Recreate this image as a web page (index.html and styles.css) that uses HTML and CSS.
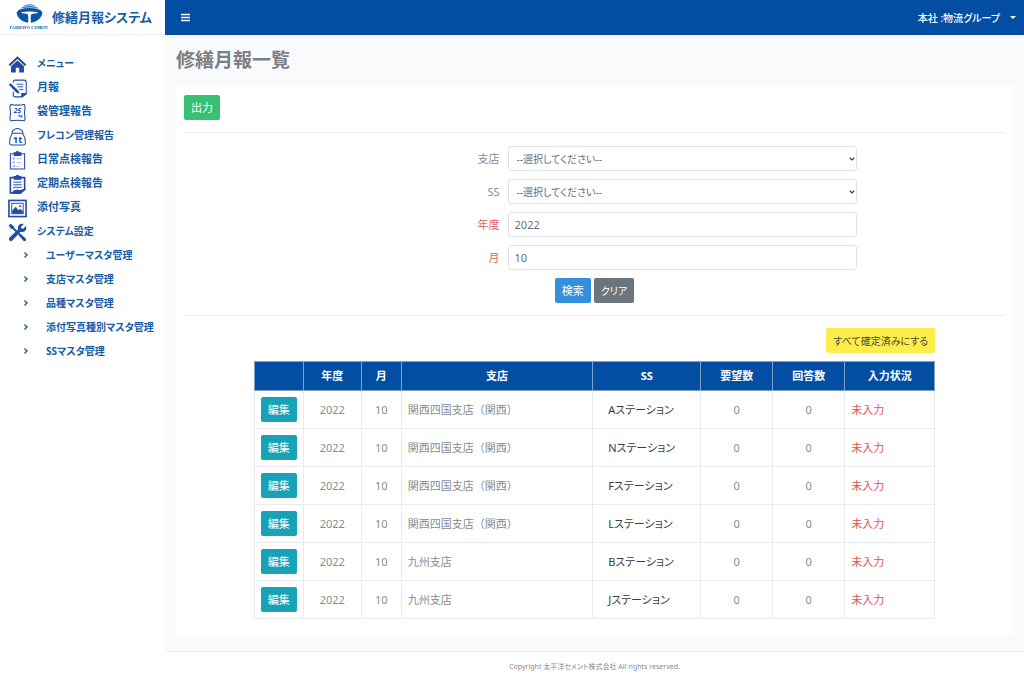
FILE: index.html
```html
<!DOCTYPE html>
<html lang="ja">
<head>
<meta charset="utf-8">
<meta name="viewport" content="width=device-width, initial-scale=1">
<title>修繕月報システム</title>
<link rel="stylesheet" href="styles.css">
</head>
<body>
<div class="app">
  <aside class="sidebar">
    <a class="brand" href="#">
      <svg class="brand-logo" viewBox="0 0 38 26" aria-hidden="true">
        <path d="M12.500 2.200Q19.500 -1.800 26.500 2.200Q19.500 1 12.500 2.200Z" fill="#4f86c4"/>
        <path d="M9.500 4.500Q19.500 -.300 29.500 4.500Q19.500 2.300 9.500 4.500Z" fill="#2b6cb4"/>
        <path d="M6.700 8.500Q8 4 19.500 4T32.300 8.500C32.500 13 27 18.800 19.500 18.800S6.500 13 6.700 8.500Z" fill="#0a55a4"/>
        <path d="M11.300 8.200Q19.500 6.800 27.700 8.200L27.200 9.300Q23 9.300 21 10.500Q20.400 14 20.800 19H18.200Q18.600 14 18 10.500Q16 9.300 11.800 9.300Z" fill="#fff"/>
        <text x="19" y="24.500" text-anchor="middle" class="brand-name">T<tspan class="brand-small">AIHEIYO</tspan> C<tspan class="brand-small">EMENT</tspan></text>
      </svg>
      <span class="brand-title">修繕月報システム</span>
    </a>
    <nav class="menu">
      <a class="menu-item small" href="#"><svg class="icon" viewBox="0 0 20 20"><path d="M10 1.200L.700 10l1.500 1.500L10 4.300l7.800 7.200L19.300 10z"/><path d="M10 5.700l-6.800 6.200V18.500h5v-5h3.600v5h5v-6.600z"/></svg>メニュー</a>
      <a class="menu-item" href="#"><svg class="icon line" viewBox="0 0 20 20"><path d="M5.500 4V3.500Q5.500 1.200 8 1.200H17Q19.200 1.200 19.200 3.500V15.500M5.500 13.500V16Q5.500 18.800 8 18.800H15L19.200 15.500"/><path d="M14.500 18.500V15.300H19z" class="solid"/><path d="M9 5.500h7M10 8.200h6M12 11h4" stroke-width="1"/><path d="M1.200 6L2.800 4.800L11 12.500L11.800 15L9 14.200Z" class="solid" stroke-width=".600"/></svg>月報</a>
      <a class="menu-item" href="#"><svg class="icon line" viewBox="0 0 20 20"><path d="M3 1.500Q10 3 17 1.500L18 3.500Q16.800 10 18 16.500L17 18.800Q10 17.500 3 18.800L2 16.500Q3.200 10 2 3.500Z"/><text x="10" y="10.500" text-anchor="middle" class="icon-text">25<tspan x="13" y="15" class="icon-unit">kg</tspan></text></svg>袋管理報告</a>
      <a class="menu-item small" href="#"><svg class="icon line" viewBox="0 0 20 20"><path d="M4.500 6.500Q1.200 12 1.800 17.500Q2 18.900 3.500 18.900H16.500Q18 18.900 18.200 17.500Q18.800 12 15.500 6.500ZM4.500 6.500V4.500L7 2.500Q10 .500 13 2.500L15.500 4.500V6.500"/><text x="10" y="16.500" text-anchor="middle" class="icon-ton">1t</text></svg>フレコン管理報告</a>
      <a class="menu-item" href="#"><svg class="icon line" viewBox="0 0 20 20"><path d="M6.500 2.800H2.500V19H17.500V2.800H13.500"/><path d="M6.500 1.800H8.300Q10 -.800 11.700 1.800H13.500V4.800H6.500Z" class="solid"/><path d="M5 8l.800.800L7 7M5 12l.800.800L7 11M5 16l.800.800L7 15" stroke-width=".800"/><path d="M9 8.200h5M9 12.200h5M9 16.200h3" stroke-width=".400"/></svg>日常点検報告</a>
      <a class="menu-item" href="#"><svg class="icon line" viewBox="0 0 20 20"><path d="M6.500 2.800H2.500V19H13L17.500 15.500V2.800H13.500" stroke-width="1.700"/><path d="M6.500 1.500H8.300Q10 -.800 11.700 1.500H13.500V4.500H6.500Z" class="solid"/><path d="M5.500 7.500h9M5.500 10.300h9M5.500 13h9" stroke-width="1"/><path d="M4 19Q8 14.500 12 16.500L17.500 15L13 19.500Z" class="solid"/></svg>定期点検報告</a>
      <a class="menu-item" href="#"><svg class="icon line" viewBox="0 0 20 20"><rect x="1" y="1.500" width="18" height="17" stroke-width="1.700"/><rect x="4" y="4.500" width="12" height="11" stroke-width="1"/><path d="M4.500 15V12.500L8 8.500L11 12L13 10.500L15.500 13V15Z" class="solid" stroke-width=".500"/><circle cx="12.800" cy="7.500" r="1" class="solid" stroke-width=".300"/></svg>添付写真</a>
      <a class="menu-item small" href="#"><svg class="icon" viewBox="0 0 20 20"><path d="M.800 2.500L2.500.800L6 3.200L6.200 4.800L10 8.600L8.600 10L4.800 6.200L3.200 6Z"/><path d="M12.200 10.600L18.600 16.300Q19.700 17.700 18.600 18.700T16.200 18.600L10.600 12.200Z"/><path d="M18.900 3.200L16 6.100L14.200 5.700L13.800 4L16.700 1.100Q13.500 0 11.500 2.100T10.700 6.700L1.500 15.500Q.300 17 1.500 18.400T4.500 18.500L13.300 9.300Q16.200 10.100 18.100 8.200T18.900 3.200Z"/></svg>システム設定</a>
      <a class="menu-item small sub" href="#"><svg class="chevron" viewBox="0 0 6 8"><path d="M1.500 1.500L4 4L1.500 6.500"/></svg>ユーザーマスタ管理</a>
      <a class="menu-item small sub" href="#"><svg class="chevron" viewBox="0 0 6 8"><path d="M1.500 1.500L4 4L1.500 6.500"/></svg>支店マスタ管理</a>
      <a class="menu-item small sub" href="#"><svg class="chevron" viewBox="0 0 6 8"><path d="M1.500 1.500L4 4L1.500 6.500"/></svg>品種マスタ管理</a>
      <a class="menu-item small sub" href="#"><svg class="chevron" viewBox="0 0 6 8"><path d="M1.500 1.500L4 4L1.500 6.500"/></svg>添付写真種別マスタ管理</a>
      <a class="menu-item small sub" href="#"><svg class="chevron" viewBox="0 0 6 8"><path d="M1.500 1.500L4 4L1.500 6.500"/></svg>SSマスタ管理</a>
    </nav>
  </aside>

  <div class="page">
    <header class="topbar">
      <button class="icon-button" type="button" aria-label="メニュー切替"><svg class="burger" viewBox="0 0 9 9"><path d="M0 1.500h9M0 4.500h9M0 7.500h9"/></svg></button>
      <button class="user-button" type="button">本社 :物流グループ<svg class="caret" viewBox="0 0 6 3"><path d="M0 0h6L3 3z"/></svg></button>
    </header>

    <main class="content">
      <h1 class="title">修繕月報一覧</h1>
      <section class="card">
        <div class="toolbar"><button class="btn green" type="button">出力</button></div>
        <form class="search">
          <div class="field">
            <label class="label" for="branch">支店</label>
            <div class="select-wrap"><select class="control" id="branch"><option>--選択してください--</option></select><svg class="arrow" viewBox="0 0 6 4"><path d="M.700.700L3 3L5.300.700"/></svg></div>
          </div>
          <div class="field">
            <label class="label" for="station">SS</label>
            <div class="select-wrap"><select class="control" id="station"><option>--選択してください--</option></select><svg class="arrow" viewBox="0 0 6 4"><path d="M.700.700L3 3L5.300.700"/></svg></div>
          </div>
          <div class="field">
            <label class="label required" for="year">年度</label>
            <input class="control" id="year" type="text" value="2022">
          </div>
          <div class="field">
            <label class="label required" for="month">月</label>
            <input class="control" id="month" type="text" value="10">
          </div>
          <div class="actions">
            <button class="btn blue" type="button">検索</button>
            <button class="btn gray small" type="reset">クリア</button>
          </div>
        </form>
        <div class="results">
          <div class="results-bar"><button class="btn yellow small" type="button">すべて確定済みにする</button></div>
          <table class="table">
            <colgroup><col class="c-edit"><col class="c-year"><col class="c-month"><col><col class="c-station"><col class="c-count"><col class="c-count"><col class="c-status"></colgroup>
            <thead><tr><th></th><th>年度</th><th>月</th><th>支店</th><th>SS</th><th>要望数</th><th>回答数</th><th>入力状況</th></tr></thead>
            <tbody>
              <tr><td class="center"><button class="btn teal" type="button">編集</button></td><td class="center">2022</td><td class="center">10</td><td class="branch">関西四国支店（関西）</td><td class="station">Aステーション</td><td class="center">0</td><td class="center">0</td><td class="status">未入力</td></tr>
              <tr><td class="center"><button class="btn teal" type="button">編集</button></td><td class="center">2022</td><td class="center">10</td><td class="branch">関西四国支店（関西）</td><td class="station">Nステーション</td><td class="center">0</td><td class="center">0</td><td class="status">未入力</td></tr>
              <tr><td class="center"><button class="btn teal" type="button">編集</button></td><td class="center">2022</td><td class="center">10</td><td class="branch">関西四国支店（関西）</td><td class="station">Fステーション</td><td class="center">0</td><td class="center">0</td><td class="status">未入力</td></tr>
              <tr><td class="center"><button class="btn teal" type="button">編集</button></td><td class="center">2022</td><td class="center">10</td><td class="branch">関西四国支店（関西）</td><td class="station">Lステーション</td><td class="center">0</td><td class="center">0</td><td class="status">未入力</td></tr>
              <tr><td class="center"><button class="btn teal" type="button">編集</button></td><td class="center">2022</td><td class="center">10</td><td class="branch">九州支店</td><td class="station">Bステーション</td><td class="center">0</td><td class="center">0</td><td class="status">未入力</td></tr>
              <tr><td class="center"><button class="btn teal" type="button">編集</button></td><td class="center">2022</td><td class="center">10</td><td class="branch">九州支店</td><td class="station">Jステーション</td><td class="center">0</td><td class="center">0</td><td class="status">未入力</td></tr>
            </tbody>
          </table>
        </div>
      </section>
    </main>
    <footer class="footer">Copyright 太平洋セメント株式会社 All rights reserved.</footer>
  </div>
</div>
</body>
</html>
```

FILE: styles.css
```css
* { box-sizing: border-box; }

body {
  margin: 0;
  background: #fff;
  color: #868b90;
  font-family: "Noto Sans", "Noto Sans CJK JP", sans-serif;
  font-size: 11px;
  line-height: 16px;
  font-feature-settings: "palt";
}

button, input, select { font: inherit; font-feature-settings: inherit; }
a { text-decoration: none; }

.app { display: flex; min-height: 100vh; }

/* Sidebar */
.sidebar { flex: 0 0 165px; background: #fff; }
.brand {
  display: flex;
  align-items: center;
  gap: 4px;
  height: 35px;
  padding-left: 10px;
  border-bottom: 1px solid #f0f2f4;
  color: #175ca7;
  font-size: 13px;
  font-weight: 700;
  white-space: nowrap;
}
.brand-logo { width: 38px; height: 26px; flex: none; }
.brand-name { font: bold 5px "Liberation Serif", serif; fill: #0a4f9e; }
.brand-small { font-size: 4px; }
.menu { padding-top: 16px; }
.menu-item {
  display: flex;
  align-items: center;
  gap: 10px;
  height: 24px;
  padding-left: 8px;
  color: #175ca7;
  font-weight: 700;
  white-space: nowrap;
}
.icon { width: 19px; height: 19px; flex: none; margin-top: 2px; fill: #214ba6; }
.line { fill: none; stroke: #214ba6; stroke-width: 1.1px; }
.solid { fill: #214ba6; }
.icon-text, .icon-unit, .icon-ton { fill: #214ba6; stroke: none; font-weight: 700; }
.icon-text { font-size: 7px; font-style: italic; }
.icon-unit { font-size: 4px; }
.icon-ton { font-size: 10px; }
.sub { gap: 17px; padding-left: 23px; }
.chevron { width: 6px; height: 8px; flex: none; fill: none; stroke: #175ca7; stroke-width: 1.4px; }

/* Page */
.page { flex: 1; min-width: 0; display: flex; flex-direction: column; }
.topbar {
  display: flex;
  align-items: center;
  justify-content: space-between;
  height: 35px;
  padding: 0 8px 0 16px;
  background: #034ea2;
}
.icon-button, .user-button {
  display: flex;
  align-items: center;
  padding: 0;
  border: 0;
  background: none;
  color: #fff;
}
.user-button { gap: 10px; font-size: 10px; font-weight: 500; }
.burger { width: 9px; height: 9px; stroke: #fff; stroke-width: 1.5px; }
.caret { width: 6px; height: 3px; fill: #fff; }
.content { flex: 1; padding: 12px 11px 15px; background: #f8fafc; }
.title {
  margin: 0 0 12px;
  color: #7b7f83;
  font-size: 19px;
  font-weight: 700;
  line-height: 27px;
}
.card { padding: 9px 8px 17px; background: #fff; }

.btn {
  height: 25px;
  padding: 0 6px;
  border: 1px solid transparent;
  border-radius: 2px;
  color: #fff;
  line-height: 16px;
  white-space: nowrap;
}
.small { font-size: 10px; }
.green { background: #38c172; }
.blue { background: #3490dc; }
.gray { background: #6c757d; }
.yellow { background: #ffed4a; color: #4b4a35; }
.teal { background: #17a2b8; }

/* Search */
.toolbar { padding-bottom: 12px; border-bottom: 1px solid #ebecee; }
.search {
  display: flex;
  flex-direction: column;
  gap: 8px;
  padding: 13px 0 12px;
  border-bottom: 1px solid #ebecee;
}
.field {
  display: grid;
  grid-template-columns: 315fr 349fr;
  align-items: center;
  column-gap: 8px;
  padding-right: 18%;
}
.label { text-align: right; }
.required { color: #e8605c; }
.control {
  display: block;
  width: 100%;
  height: 25px;
  margin: 0;
  padding: 0 6px;
  border: 1px solid #dfe2e7;
  border-radius: 3px;
  background: #fff;
  color: #686e75;
}
.select-wrap { position: relative; }
select.control { appearance: none; padding: 0 8px; font-size: 10px; }
.arrow {
  position: absolute;
  top: 11px;
  right: 2px;
  width: 6px;
  height: 4px;
  fill: none;
  stroke: #33373b;
  stroke-width: 1.2px;
  pointer-events: none;
}
.actions { display: flex; justify-content: center; gap: 3px; }

/* Results */
.results { width: 83%; margin: 0 auto; padding-top: 12px; }
.results-bar { display: flex; justify-content: flex-end; margin-bottom: 8px; }
.table { width: 100%; border-collapse: collapse; table-layout: fixed; }
.c-edit { width: 49px; }
.c-year { width: 58px; }
.c-month { width: 40px; }
.c-station { width: 108px; }
.c-count { width: 72px; }
.c-status { width: 90px; }
.table th {
  height: 29px;
  padding: 0;
  border: 1px solid #7fa3cd;
  background: #034ea2;
  color: #fff;
  font-weight: 700;
}
.table td {
  height: 38px;
  padding: 0 6px;
  border: 1px solid #e9ebee;
  white-space: nowrap;
}
.table .center { padding: 0; text-align: center; }
.table .branch { font-feature-settings: normal; }
.table .station { padding-left: 15px; color: #3c3c3c; }
.table .status { color: #e4534f; }

.footer {
  padding: 7px 0 8px;
  border-top: 1px solid #eff1f3;
  font-size: 7px;
  text-align: center;
}
```
